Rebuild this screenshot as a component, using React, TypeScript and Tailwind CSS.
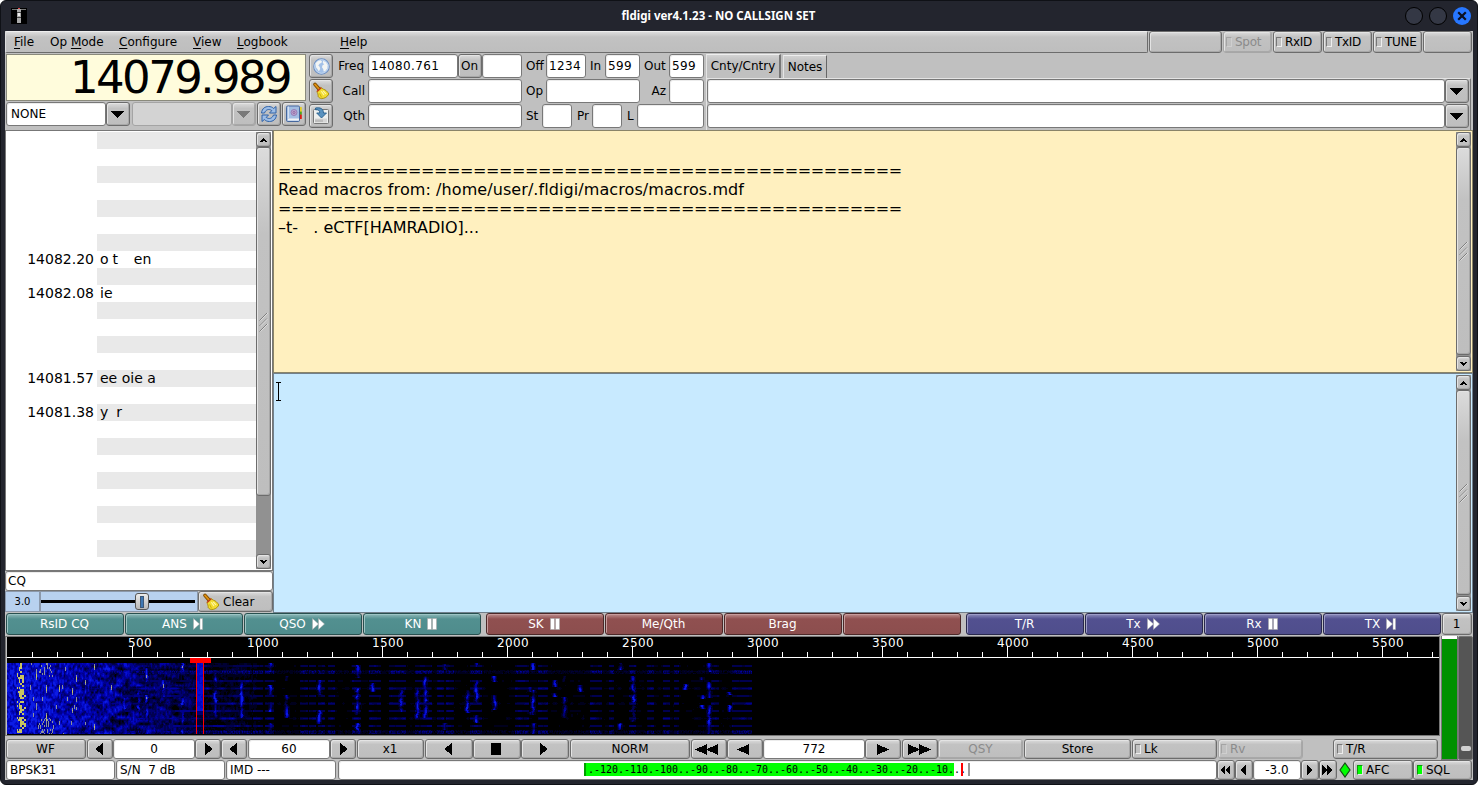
import React, { useMemo } from "react";

const RAISED =
  "box-border flex items-center justify-center rounded-[3px] border border-[#6c6c6c] bg-linear-to-b from-[#dcdcdc] via-[#c2c2c2] via-25% to-[#bebebe] shadow-[inset_1px_1px_0_#e4e4e4,inset_-1px_-1px_0_#a8a8a8] shrink-0";
const FIELD =
  "box-border flex items-center rounded-[3px] border border-[#787878] bg-white shadow-[inset_1px_1px_0_#ececec] shrink-0 whitespace-pre";

function Btn({ className = "", children }: { className?: string; children?: React.ReactNode }) {
  return <div className={`${RAISED} ${className}`}>{children}</div>;
}

function Field({ className = "", children }: { className?: string; children?: React.ReactNode }) {
  return <div className={`${FIELD} ${className}`}>{children}</div>;
}

function Light({ on = false, dim = false }: { on?: boolean; dim?: boolean }) {
  const look = on
    ? "border-[#0a9a0a] border-r-[#e6e6e6] border-b-[#e6e6e6] bg-[#00ff00]"
    : dim
      ? "border-[#a4a4a4] border-r-[#cfcfcf] border-b-[#cfcfcf]"
      : "border-[#777] border-r-[#eee] border-b-[#eee]";
  return <span className={`mr-[3px] box-border h-[10px] w-[6px] shrink-0 border ${look}`} />;
}

function Shape({ d, w, h, fill = "#000" }: { d: string; w: number; h: number; fill?: string }) {
  return (
    <svg width={w} height={h} viewBox={`0 0 ${w} ${h}`} className="block shrink-0" shapeRendering="crispEdges">
      <path d={d} fill={fill} />
    </svg>
  );
}
const Right = () => <Shape w={9} h={12} d="M1 0L9 6L1 12Z" />;
const Left = () => <Shape w={11} h={12} d="M8 0L0 6L8 12Z" />;
const WideRight = () => <Shape w={12} h={11} d="M0 0L12 5.5L0 11Z" />;
const WideLeft = () => <Shape w={16} h={11} d="M12 0L0 5.5L12 11Z" />;
const FastRight = () => <Shape w={23} h={11} d="M0 0L12 5.5L0 11ZM11 0L23 5.5L11 11Z" />;
const FastLeft = () => <Shape w={29} h={11} d="M12 0L0 5.5L12 11ZM23 0L11 5.5L23 11Z" />;
const SmallRight = () => <Shape w={6} h={10} d="M0 0L6 5L0 10Z" />;
const SmallLeft = () => <Shape w={8} h={10} d="M6 0L0 5L6 10Z" />;
const SmallFastRight = () => <Shape w={12} h={10} d="M0 0L5 5L0 10ZM5 0L10 5L5 10Z" />;
const SmallFastLeft = () => <Shape w={12} h={10} d="M5 0L0 5L5 10ZM10 0L5 5L10 10Z" />;
const Drop = ({ fill = "#000" }: { fill?: string }) => <Shape w={15} h={7} d="M0 0H13L6.5 7Z" fill={fill} />;

function Globe() {
  return (
    <svg width="17" height="17" viewBox="0 0 16 16">
      <circle cx="8" cy="8" r="7.3" fill="#a3c1e8" stroke="#6d8fc2" strokeWidth="1" />
      <circle cx="8" cy="8" r="6.4" fill="none" stroke="#d3e2f5" strokeWidth=".7" />
      <path d="M2.5 5L4 3.2L7 2.2L8.5 3.2L7.8 4.6L6.4 5.2L5 7L6.2 8.2L6.8 10L5.6 12.6L4.4 10.8L2.8 8.8Z" fill="#f3f5f4" />
      <path d="M9.6 2.6L12.2 4L13.8 6.8L13.4 9.8L11.4 12.4L10 12.6L9.6 10.4L8.4 8.8L9 6.8L10.6 5.8L9.2 4.6Z" fill="#f3f5f4" />
    </svg>
  );
}

function Broom() {
  return (
    <svg width="18" height="18" viewBox="0 0 18 18" className="shrink-0">
      <path d="M3 2.4L7 7" stroke="#7c4a00" strokeWidth="3.6" strokeLinecap="round" />
      <path d="M3 2.4L7 7" stroke="#e0900f" strokeWidth="1.8" strokeLinecap="round" />
      <path d="M4.8 9.6C6.2 8.6 8.2 6.6 8.8 5.4L11.4 7.2C13.4 7.6 15.6 9.6 16.8 12C15.4 15 12.4 16.6 9.4 16.6C7.8 16.2 6.6 15.4 6.2 14.6C6.2 12.6 5.8 11 4.8 9.6Z" fill="#f2dc30" stroke="#a88c00" strokeWidth=".9" />
      <path d="M5.1 9.5L9.2 5.8" stroke="#c6341a" strokeWidth="1.5" />
      <path d="M9.4 9.2L12 13M11.2 8.8L14 12" stroke="#fff9ae" strokeWidth="1.1" />
      <path d="M7.6 11.5L9.6 15.4" stroke="#c4a710" strokeWidth=".9" />
    </svg>
  );
}

function SaveIcon() {
  return (
    <svg width="18" height="18" viewBox="0 0 18 18">
      <rect x="1.5" y="2.5" width="15" height="14" rx="1" fill="#eef0ef" stroke="#777" />
      <rect x="3" y="11.5" width="12" height="4" fill="#d6d6d6" />
      <path d="M4 12.5V15M6 12.5V15M8 12.5V15M10 12.5V15" stroke="#989898" strokeWidth=".8" />
      <path d="M3.5 1C8 .2 11.5 1.5 11.5 6H14.5L9.5 11L4.7 6H7.7C7.8 3.6 6.3 2.5 3.5 2.7Z" fill="#5a92bf" stroke="#275f8c" strokeWidth=".9" />
    </svg>
  );
}

function SyncIcon() {
  return (
    <svg width="18" height="18" viewBox="0 0 18 18">
      <g fill="#9dbde6" stroke="#2e62a8" strokeWidth="1" strokeLinejoin="round">
        <path d="M1.5 8C2 3.5 5 1.5 8.5 1.5C10.7 1.5 12.4 2.2 13.6 3.5L16 1.5V8H9.5L11.8 5.6C9 3.5 5.8 4.5 4.5 8Z" />
        <path d="M16.5 10C16 14.5 13 16.5 9.5 16.5C7.3 16.5 5.6 15.8 4.4 14.5L2 16.5V10H8.5L6.2 12.4C9 14.5 12.2 13.5 13.5 10Z" />
      </g>
    </svg>
  );
}

function BookIcon() {
  return (
    <svg width="18" height="18" viewBox="0 0 18 18">
      <rect x="14.2" y="2" width="2.6" height="5" rx=".6" fill="#e7cf22" />
      <rect x="14.2" y="6.6" width="2.6" height="3.2" fill="#4ca51c" />
      <rect x="14.2" y="9.4" width="2.6" height="4.6" rx=".6" fill="#dd1d15" />
      <rect x="1.5" y="1" width="13" height="15.5" rx="1.2" fill="#a3bde2" stroke="#45679e" />
      <path d="M3.4 1.5V13" stroke="#d9e5f5" />
      <rect x="3" y="13.5" width="11" height="2" fill="#f1f3f5" />
      <circle cx="9" cy="7.5" r="3" fill="#b9a6cd" stroke="#8f6fae" strokeWidth=".8" />
      <circle cx="9" cy="7.5" r="1.1" fill="none" stroke="#8f5f9e" strokeWidth=".8" />
    </svg>
  );
}

function Scroll({ thumb }: { thumb: string }) {
  return (
    <div className="my-px flex w-[15px] shrink-0 flex-col bg-[#919191]">
      <Btn className="h-[15px] w-[15px]">
        <Shape w={7} h={4} d="M3.5 0L7 3V4H5L3.5 2.5L2 4H0V3Z" />
      </Btn>
      <Btn className={`w-[15px] ${thumb}`}>
        <svg width="9" height="20" viewBox="0 0 9 20">
          <path d="M.5 8.5L8 1M.5 14L8 6.5M.5 19.5L8 12" stroke="#777" strokeWidth=".9" />
          <path d="M1.5 8.5L9 1M1.5 14L9 6.5M1.5 19.5L9 12" stroke="#e6e6e6" strokeWidth=".8" />
        </svg>
      </Btn>
      <div className="grow" />
      <Btn className="h-[15px] w-[15px]">
        <Shape w={7} h={4} d="M3.5 4L7 1V0H5L3.5 1.5L2 0H0V1Z" />
      </Btn>
    </div>
  );
}

function Menu({ k, pre = "", rest, className }: { k: string; pre?: string; rest: string; className: string }) {
  return (
    <span className={`shrink-0 whitespace-pre ${className}`}>
      {pre}
      <span className="underline decoration-1 underline-offset-2">{k}</span>
      {rest}
    </span>
  );
}

const MACRO_TONES = {
  teal: "from-[#8fbab9] via-[#529090] to-[#4f8c8c] border-[#28504f] shadow-[inset_1px_1px_0_#9cc4c4]",
  red: "from-[#bd9090] via-[#905050] to-[#8c4e4e] border-[#4c2828] shadow-[inset_1px_1px_0_#c79c9c]",
  blue: "from-[#908fbd] via-[#525090] to-[#4f4e8c] border-[#28284c] shadow-[inset_1px_1px_0_#9c9cc7]",
};
type Glyph = "end" | "fast" | "pause";
const GLYPHS: Record<Glyph, React.ReactNode> = {
  end: <svg width="11" height="12"><path d="M.5 .5L6.5 6L.5 11.5ZM7 .5H9.5V11.5H7Z" fill="#fff" stroke="#aaa" strokeWidth=".5" /></svg>,
  fast: <svg width="13" height="12"><path d="M.5 .5L6.5 6L.5 11.5ZM6.5 .5L12.5 6L6.5 11.5Z" fill="#fff" stroke="#aaa" strokeWidth=".5" /></svg>,
  pause: <svg width="10" height="12"><path d="M.5 .5H4.5V11.5H.5ZM5.5 .5H9.5V11.5H5.5Z" fill="#fff" stroke="#aaa" strokeWidth=".6" /></svg>,
};

function MacroGroup({ tone, items }: { tone: keyof typeof MACRO_TONES; items: [string, Glyph?][] }) {
  return (
    <div className="flex w-[475px] shrink-0 gap-px">
      {items.map(([label, glyph], i) => (
        <div
          key={i}
          className={`box-border flex h-[22px] w-[118px] shrink-0 items-center justify-center gap-1.5 rounded-[3px] border bg-linear-to-b via-25% text-white ${glyph ? "pr-[2px]" : "pr-px"} ${MACRO_TONES[tone]}`}
        >
          <span>{label}</span>
          {glyph && GLYPHS[glyph]}
        </div>
      ))}
    </div>
  );
}

function hash(a: number, b: number) {
  let h = Math.imul(a + 101, 374761393) ^ Math.imul(b + 57, 668265263);
  h = Math.imul(h ^ (h >>> 13), 1274126177);
  return ((h ^ (h >>> 16)) >>> 0) / 4294967296;
}

function smooth(x: number, y: number, seed: number) {
  const ix = Math.floor(x);
  const iy = Math.floor(y);
  const fx = x - ix;
  const fy = y - iy;
  const top = hash(ix, iy + seed) * (1 - fx) + hash(ix + 1, iy + seed) * fx;
  const low = hash(ix, iy + 1 + seed) * (1 - fx) + hash(ix + 1, iy + 1 + seed) * fx;
  return top * (1 - fy) + low * fy;
}

type Trace = [number, ...[number, number][]];
const TRACES: Trace[] = [
  [104, [46, 55], [75, 78]], [117, [51, 54], [61, 72]], [131, [53, 76]], [139, [31, 45], [58, 81]],
  [156, [43, 60], [81, 88]], [175, [26, 35], [61, 68], [75, 97]], [208, [33, 81]], [234, [43, 81]],
  [263, [26, 35], [48, 58], [65, 75], [86, 97]], [279, [39, 44], [58, 81]], [312, [43, 58], [73, 87]],
  [350, [28, 41], [51, 78], [86, 97]], [365, [46, 55]], [394, [53, 75]], [410, [51, 81]], [418, [39, 81]],
  [438, [27, 33], [86, 93]], [460, [53, 76]], [469, [26, 30], [43, 68], [78, 86]], [487, [39, 45], [58, 73]],
  [522, [50, 55], [75, 78]], [526, [26, 33], [53, 78], [86, 97]], [547, [43, 50], [56, 60]],
  [557, [39, 45], [60, 81]], [573, [48, 55]], [613, [26, 33], [86, 93]], [626, [39, 85]],
  [678, [47, 53]], [695, [40, 43], [58, 62], [68, 72]], [702, [26, 35], [45, 61], [68, 97]], [722, [55, 58], [68, 75]],
];
const SPARKS: Trace[] = [
  [29, [35, 43], [66, 73]], [23, [49, 53]], [39, [48, 56], [76, 86]], [52, [48, 55], [84, 88]],
  [65, [51, 58], [71, 76]], [69, [38, 45], [60, 65], [70, 73]], [78, [43, 48], [85, 88]], [58, [30, 34]],
  [87, [27, 33], [87, 93]], [104, [48, 53]], [156, [47, 51]], [139, [38, 41], [60, 62]], [175, [29, 31]], [26, [76, 80]],
];
const BANDS: [number, number][] = [
  [28.5, 0.5], [34, 0.75], [35.5, 0.7], [43.5, 0.55], [51, 0.55], [58.5, 0.55], [66.2, 0.6], [73.5, 0.55], [81, 0.55], [88.5, 0.6], [94, 0.7], [95.5, 0.7],
];
const CLUSTERS: [number, number][] = [
  [246, 255], [258, 266], [293, 300], [302, 308], [311, 317], [321, 327], [345, 353], [362, 373], [382, 398], [408, 424], [430, 436], [439, 446],
  [463, 474], [508, 521], [531, 540], [583, 594], [602, 606], [622, 628], [640, 646], [656, 662], [667, 671],
  [704, 711], [725, 732], [733, 744],
];
const PALETTE = ["#00001c", "#000034", "#000050", "#00006e", "#00008c", "#0000a8", "#0208c0", "#0610d4", "#0c1ce4", "#2038dc", "#8c9098", "#c8c460"];

function level(x: number, y: number) {
  const n = smooth(x / 1.5, y / 2.4, 0);
  const wide = smooth(x / 7, y / 3.2, 400);
  const fine = hash(x, y >> 1);
  let v: number;
  if (x < 189) {
    const dense = 0.66 * (0.55 + 0.9 * n) + (fine - 0.5) * 0.1;
    const loose = (0.6 - Math.max(0, x - 92) * 0.0026) * (n * 0.8 + wide * 1.1 - 0.28);
    const t = Math.min(1, Math.max(0, (x - 25) / 95));
    v = dense * (1 - t) + loose * t;
  } else if (x < 250) {
    v = 0.22 * (n + wide - 0.5);
  } else {
    v = 0.1 * (n + wide * 0.4 - 0.4);
  }
  const cluster = CLUSTERS.some(([a, b]) => x >= a && x <= b);
  for (const [by, amp] of BANDS) {
    const d = Math.abs(y - by);
    if (d >= 1.3) continue;
    let part: number;
    if (amp > 0.65) part = (x < 245 ? 0.75 : cluster ? 0.72 : 0.3) * (0.35 + 0.65 * fine);
    else if (x < 245) part = 0.25 + 0.85 * smooth(x / 5, by, 700);
    else part = (cluster ? 0.6 : 0.08) + 0.45 * (smooth(x / 4, by, 820) - 0.4);
    v = Math.max(v, amp * part * (1 - d * 0.35));
  }
  for (const [tx, ...segs] of TRACES) {
    const sway = (smooth(tx, y / 3, 90) - 0.5) * 2;
    const d = Math.abs(x - tx - sway);
    if (d >= 3) continue;
    for (const [a, b] of segs) {
      if (y < a || y >= b) continue;
      const glow = d < 0.8 ? 0.76 : d < 1.6 ? 0.46 : 0.2;
      v = Math.max(v, glow * (0.2 + 1.05 * smooth(tx, y / 3.5, 160)));
    }
  }
  if (x > 189 && x < 197) v = Math.max(v, y < 74 ? 0.6 + n * 0.16 : y < 78 ? 0.4 : 0.12 + n * 0.16);
  v = Math.min(x < 80 ? Math.max(v, 0.22) : v, 0.82);
  for (const [sx, ...segs] of SPARKS) {
    if (x !== sx) continue;
    for (const [a, b] of segs) if (y >= a && y < b) v = Math.min(y - a, b - 1 - y) > 1 ? 0.98 : 0.9;
  }
  const block = y >> 1;
  if (x >= 10 && x < 19 && hash((x + 1) >> 1, block) > (x > 11 && x < 17 ? 0.42 : 0.82)) v = 0.98;
  if (x > 31 && x < 46 && (y < 40 || y > 80) && hash(x, block) > 0.78) v = 0.9;
  if (x >= 20 && x < 70 && hash(x, (y >> 2) + 40) > 0.975) v = 0.9;
  return v;
}

function Waterfall() {
  const paths = useMemo(() => {
    const out = PALETTE.map(() => "");
    for (let y = 26; y < 97; y++) {
      const row = Array.from({ length: 745 }, (_, x) => {
        const v = level(x, y);
        return v > 0.95 ? PALETTE.length - 1 : Math.floor(v * PALETTE.length) - (v > 0.87 ? 0 : 1);
      });
      let x = 0;
      while (x < row.length) {
        const q = row[x];
        let run = 1;
        while (row[x + run] === q) run++;
        if (q >= 0) out[q] += `M${x} ${y}h${run}v1h-${run}z`;
        x += run;
      }
    }
    return out;
  }, []);
  const ticks = Array.from({ length: 57 }, (_, i) => i + 1);
  return (
    <svg width="1432" height="98" viewBox="0 0 1432 98" className="block bg-black" shapeRendering="crispEdges">
      {paths.map((d, i) => <path key={i} d={d} fill={PALETTE[i]} />)}
      <rect x="0" y="20" width="1432" height="1" fill="#fff" />
      {ticks.map((t) => <rect key={t} x={t * 25} y={t % 5 ? 15 : 9} width="1" height={t % 5 ? 5 : 11} fill="#fff" />)}
      {ticks.filter((t) => t % 5 === 0).map((t) => (
        <text key={t} x={t * 25 - (t === 5 ? 4 : 10)} y="10" fontSize="12" letterSpacing=".37" fill="#fff">{t * 100}</text>
      ))}
      <rect x="183" y="21" width="21" height="5" fill="#f00" />
      <rect x="189" y="26" width="1" height="71" fill="#f00" />
      <rect x="196" y="26" width="1" height="71" fill="#f00" />
    </svg>
  );
}

const SIGNALS: Record<number, [string, string]> = {
  7: ["14082.20", "o t    en"],
  9: ["14082.08", "ie"],
  14: ["14081.57", "ee oie a"],
  16: ["14081.38", "y  r"],
};

function Browser() {
  return (
    <div className="flex h-[441px] border border-[#777] bg-white">
      <div className="flex w-[250px] shrink-0 flex-col overflow-hidden pt-px text-sm">
        {Array.from({ length: 25 }, (_, i) => (
          <div key={i} className="flex h-[17px] shrink-0 leading-[17px]">
            <span className="w-[91px] shrink-0 pr-[3px] text-right">{SIGNALS[i]?.[0]}</span>
            <span className={`grow whitespace-pre pl-[3px] ${i === 14 ? "" : "[word-spacing:-0.5px]"} ${i % 2 === 0 ? "bg-[#e9e9e9]" : ""}`}>
              {SIGNALS[i]?.[1]}
            </span>
          </div>
        ))}
      </div>
      <Scroll thumb="h-[349px]" />
    </div>
  );
}

const RULE = "=".repeat(48);

export default function App() {
  return (
    <div className="box-border flex h-[785px] w-[1478px] flex-col overflow-hidden rounded-[6px] border border-[#0f1116] bg-[#23252e] pr-[4px] pl-[4px] font-['DejaVu_Sans',sans-serif] text-xs leading-none text-black">
      <div className="flex h-[30px] shrink-0 items-center">
        <div className="flex w-[179px] items-center pl-[6px]">
          <svg width="16" height="16" shapeRendering="crispEdges">
            <rect width="16" height="16" fill="#000" />
            <rect x="1" y="1" width="14" height="1" fill="#777" />
            <rect x="6" y="1" width="4" height="14" fill="#aaa" />
            <rect x="6" y="4" width="4" height="1" fill="#444" />
            <rect x="6" y="9" width="4" height="1" fill="#444" />
            <rect x="7" y="5" width="2" height="3" fill="#eee" />
            <rect x="7" y="0" width="2" height="1" fill="#d44" />
          </svg>
        </div>
        <div className="grow text-center text-[11.5px] font-bold text-white font-['Noto_Sans','DejaVu_Sans',sans-serif]">fldigi ver4.1.23 - NO CALLSIGN SET</div>
        <div className="flex w-[220px] items-center justify-end gap-[6px] pr-[2px]">
          <span className="h-[18px] w-[18px] rounded-full border border-black bg-[#343845]" />
          <span className="h-[18px] w-[18px] rounded-full border border-black bg-[#343845]" />
          <span className="flex h-[18px] w-[18px] items-center justify-center rounded-full bg-[#2777ff]">
            <svg width="10" height="10"><path d="M1.2 1.2L8.8 8.8M8.8 1.2L1.2 8.8" stroke="#0c1020" strokeWidth="2.2" /></svg>
          </span>
        </div>
      </div>

      <div className="flex h-[749px] w-[1468px] shrink-0 flex-col bg-[#c0c0c0]">
        <div className="flex h-[22px] shrink-0 gap-px">
          <div className="box-border flex w-[1143px] shrink-0 items-center rounded-[2px] border border-t-[#eee] border-r-[#6c6c6c] border-b-[#6c6c6c] border-l-[#ddd] bg-linear-to-b from-[#dcdcdc] via-[#c2c2c2] via-25% to-[#bebebe] pl-2">
            <Menu className="w-[36px]" k="F" rest="ile" />
            <Menu className="w-[69px]" pre="Op " k="M" rest="ode" />
            <Menu className="w-[74px]" k="C" rest="onfigure" />
            <Menu className="w-[44px]" k="V" rest="iew" />
            <Menu className="w-[103px]" k="L" rest="ogbook" />
            <Menu className="w-[40px]" k="H" rest="elp" />
          </div>
          <Btn className="w-[73px]" />
          <Btn className="w-[49px] justify-start border-[#a6a6a6] pl-[2px] tracking-[-0.3px] text-[#8b8b8b]"><Light dim />Spot</Btn>
          <Btn className="w-[49px] justify-start pl-[2px] tracking-[-0.3px]"><Light />RxID</Btn>
          <Btn className="w-[49px] justify-start pl-[2px] tracking-[-0.3px]"><Light />TxID</Btn>
          <Btn className="w-[49px] justify-start pl-[2px] tracking-[-0.3px]"><Light />TUNE</Btn>
          <Btn className="w-[49px]" />
        </div>

        <div className="flex h-[77px] shrink-0">
          <div className="flex w-[303px] shrink-0 flex-col pt-px pl-px">
            <div className="box-border flex h-[47px] w-[300px] items-center justify-end border border-[#8a8a7c] bg-[#fffcdc] pr-[15px] text-[45px] tracking-[-2.6px]">14079.989</div>
            <div className="mt-px flex h-[24px]">
              <Field className="w-[100px] pl-1">NONE</Field>
              <Btn className="w-[24px]"><Drop /></Btn>
              <div className="ml-[2px] box-border w-[100px] shrink-0 rounded-[3px] border border-[#a4a4a4] bg-[#d3d3d3]" />
              <Btn className="w-[24px] border-[#a4a4a4]"><Drop fill="#7a7a7a" /></Btn>
              <Btn className="ml-px w-[24px]"><SyncIcon /></Btn>
              <Btn className="ml-px w-[24px]"><BookIcon /></Btn>
            </div>
          </div>
          <div className="ml-px flex w-[24px] shrink-0 flex-col gap-px pt-px">
            <Btn className="h-[24px]"><Globe /></Btn>
            <Btn className="h-[24px]"><Broom /></Btn>
            <Btn className="h-[24px]"><SaveIcon /></Btn>
          </div>
          <div className="flex w-[371px] shrink-0 flex-col gap-px pt-px">
            <div className="flex h-[24px] items-center">
              <span className="w-[35px] shrink-0 pr-[4px] text-right">Freq</span>
              <Field className="h-full w-[90px] pl-[2px] tracking-[.37px]">14080.761</Field>
              <Btn className="h-full w-[24px] pr-px">On</Btn>
              <Field className="h-full w-[40px]" />
              <span className="w-[24px] shrink-0 pl-[4px]">Off</span>
              <Field className="h-full w-[40px] pl-[2px] tracking-[.37px]">1234</Field>
              <span className="w-[19px] shrink-0 pl-[4px]">In</span>
              <Field className="h-full w-[35px] pl-[2px] tracking-[.37px]">599</Field>
              <span className="w-[29px] shrink-0 pl-[4px]">Out</span>
              <Field className="h-full w-[35px] pl-[2px] tracking-[.37px]">599</Field>
            </div>
            <div className="flex h-[24px] items-center">
              <span className="w-[35px] shrink-0 pr-[3px] text-right">Call</span>
              <Field className="h-full w-[154px]" />
              <span className="w-[24px] shrink-0 pl-[4px]">Op</span>
              <Field className="h-full w-[94px]" />
              <span className="w-[29px] shrink-0 pr-[3px] text-right">Az</span>
              <Field className="h-full w-[35px]" />
            </div>
            <div className="flex h-[24px] items-center">
              <span className="w-[35px] shrink-0 pr-[3px] text-right">Qth</span>
              <Field className="h-full w-[154px]" />
              <span className="w-[20px] shrink-0 pl-[4px]">St</span>
              <Field className="h-full w-[30px]" />
              <span className="w-[20px] shrink-0 pl-[5px]">Pr</span>
              <Field className="h-full w-[30px]" />
              <span className="w-[15px] shrink-0 pl-[5px]">L</span>
              <Field className="h-full w-[67px]" />
            </div>
          </div>
          <div className="ml-[2px] flex grow flex-col">
            <div className="flex h-[25px] items-end gap-[2px]">
              <div className="box-border flex h-[24px] w-[75px] items-center justify-center border-t border-r-2 border-l border-t-[#eee] border-r-[#777] border-l-[#e4e4e4] bg-linear-to-b from-[#d2d2d2] to-[#c0c0c0] to-30% pb-px">Cnty/Cntry</div>
              <div className="box-border flex h-[23px] w-[44px] items-center justify-center border-t border-r border-l border-t-[#eee] border-r-[#666] border-l-[#e4e4e4] bg-linear-to-b from-[#d2d2d2] to-[#c0c0c0] to-30%">Notes</div>
            </div>
            <div className="flex w-[765px] grow flex-col gap-px border-t border-r border-l border-t-[#e4e4e4] border-r-[#777] border-l-[#e4e4e4]">
              <div className="flex h-[24px]"><Field className="w-[738px]" /><Btn className="w-[24px]"><Drop /></Btn></div>
              <div className="flex h-[24px]"><Field className="w-[738px]" /><Btn className="w-[24px]"><Drop /></Btn></div>
            </div>
          </div>
        </div>

        <div className="flex h-[483px] shrink-0">
          <div className="flex w-[268px] shrink-0 flex-col">
            <Browser />
            <Field className="h-[20px] pl-[2px]">CQ</Field>
            <div className="flex h-[21px]">
              <div className="box-border flex w-[35px] items-center justify-center border border-[#8b98aa] bg-[#b8d1ef] text-[10px]">3.0</div>
              <div className="box-border flex w-[158px] items-center border border-[#8b98aa] bg-[#b8d1ef]">
                <div className="h-[3px] w-[94px] bg-black" />
                <div className="box-border flex h-[17px] w-[14px] items-center justify-center rounded-[3px] border border-[#555] bg-linear-to-b from-[#ececec] to-[#b8b8b8]">
                  <div className="h-[12px] w-[4px] border border-[#3c5878] bg-[#3f78b4]" />
                </div>
                <div className="h-[3px] w-[46px] bg-black" />
              </div>
              <Btn className="w-[75px] justify-start gap-[3px] pl-[3px]"><Broom />Clear</Btn>
            </div>
          </div>
          <div className="flex grow flex-col">
            <div className="flex h-[243px] border border-[#8a8468] bg-[#fff0bf]">
              <pre className="grow pt-[30px] pl-[4px] text-[16px] leading-[19px] font-['DejaVu_Sans',sans-serif]">
                <div className="tracking-[-0.41px]">{RULE}</div>
                <div className="tracking-[0.08px]">Read macros from: /home/user/.fldigi/macros/macros.mdf</div>
                <div className="tracking-[-0.41px]">{RULE}</div>
                <div>–t-   . eCTF[HAMRADIO]...</div>
              </pre>
              <Scroll thumb="h-[208px]" />
              <div className="w-px" />
            </div>
            <div className="flex h-[240px] border border-[#71808c] bg-[#c8eaff]">
              <div className="grow pt-[8px] pl-px">
                <svg width="6" height="20" shapeRendering="crispEdges"><path d="M.5 .5H5.5M3 .5V19M.5 18.5H5.5" stroke="#000" strokeWidth="1" /></svg>
              </div>
              <Scroll thumb="h-[205px]" />
              <div className="w-px" />
            </div>
          </div>
        </div>

        <div className="flex h-[23px] shrink-0 items-start gap-[5px] pl-px">
          <MacroGroup tone="teal" items={[["RsID CQ"], ["ANS", "end"], ["QSO", "fast"], ["KN", "pause"]]} />
          <MacroGroup tone="red" items={[["SK", "pause"], ["Me/Qth"], ["Brag"], [""]]} />
          <MacroGroup tone="blue" items={[["T/R"], ["Tx", "fast"], ["Rx", "pause"], ["TX", "end"]]} />
          <Btn className="-ml-[4px] h-[22px] w-[30px] pr-px">1</Btn>
        </div>

        <div className="flex h-[124px] shrink-0">
          <div className="flex w-[1436px] shrink-0 flex-col">
            <div className="box-border h-[100px] w-[1435px] border border-[#777] pl-px"><Waterfall /></div>
            <div className="mt-[3px] flex h-[20px] pl-px">
              <Btn className="w-[80px] pr-px">WF</Btn>
              <Btn className="ml-px w-[26px]"><Left /></Btn>
              <Field className="w-[82px] justify-center">0</Field>
              <Btn className="w-[26px]"><Right /></Btn>
              <Btn className="w-[26px]"><Left /></Btn>
              <Field className="ml-px w-[82px] justify-center">60</Field>
              <Btn className="w-[26px]"><Right /></Btn>
              <Btn className="ml-px w-[67px] pr-px">x1</Btn>
              <Btn className="ml-px w-[48px]"><Left /></Btn>
              <Btn className="w-[48px] pr-[2px]"><span className="h-[12px] w-[10px] bg-black" /></Btn>
              <Btn className="w-[48px] pr-[3px]"><Right /></Btn>
              <Btn className="ml-px w-[120px]">NORM</Btn>
              <Btn className="ml-px w-[36px]"><FastLeft /></Btn>
              <Btn className="w-[36px]"><WideLeft /></Btn>
              <Field className="w-[102px] justify-center">772</Field>
              <Btn className="w-[36px]"><WideRight /></Btn>
              <Btn className="ml-px w-[36px] pr-px"><FastRight /></Btn>
              <Btn className="w-[85px] border-[#a6a6a6] text-[#8b8b8b]">QSY</Btn>
              <Btn className="ml-px w-[107px]">Store</Btn>
              <Btn className="ml-px w-[85px] justify-start pl-[2px]"><Light />Lk</Btn>
              <Btn className="ml-px w-[85px] justify-start border-[#a6a6a6] pl-[2px] text-[#8b8b8b]"><Light dim />Rv</Btn>
              <Btn className="ml-[30px] w-[105px] justify-start pl-[3px]"><Light />T/R</Btn>
            </div>
          </div>
          <div className="box-border flex w-[17px] shrink-0 flex-col border border-t-0 border-[#777] bg-[#009100]"><div className="h-[3px] bg-white" /></div>
          <div className="box-border flex w-[15px] shrink-0 flex-col items-center justify-end rounded-[2px] border border-[#777] bg-[#555] pb-[8px]">
            <div className="h-[5px] w-[10px] rounded-[2px] bg-[#d0d0d0]" />
          </div>
        </div>

        <div className="flex h-[20px] shrink-0 pl-px">
          <Field className="w-[109px] pl-[3px]">BPSK31</Field>
          <Field className="ml-px w-[109px] pl-[3px]">S/N  7 dB</Field>
          <Field className="ml-px w-[110px] pl-[3px]">IMD ---</Field>
          <Field className="ml-[2px] w-[879px] pb-px pl-[245px]">
            <div className="flex h-[13px] w-[370px] shrink-0 items-center border-l-2 border-[#00a000] bg-[#00ff00] pl-[2px] font-['DejaVu_Sans_Mono',monospace] text-[10px] tracking-[-0.02px]">.-120.-110.-100..-90..-80..-70..-60..-50..-40..-30..-20..-10.</div>
            <span className="w-[12px] font-['DejaVu_Sans_Mono',monospace] text-[10px]">..</span>
            <div className="-ml-[5px] h-[13px] w-[2px] bg-[#f00]" />
            <div className="ml-[5px] h-[13px] w-[2px] bg-[#999]" />
          </Field>
          <Btn className="w-[18px]"><SmallFastLeft /></Btn>
          <Btn className="w-[18px]"><SmallLeft /></Btn>
          <Field className="w-[48px] justify-center">-3.0</Field>
          <Btn className="w-[18px]"><SmallRight /></Btn>
          <Btn className="w-[18px]"><SmallFastRight /></Btn>
          <div className="flex w-[16px] shrink-0 items-center justify-center">
            <svg width="12" height="16"><path d="M6 1L11 8L6 15L1 8Z" fill="#00ff00" stroke="#174a17" strokeWidth="1.2" /></svg>
          </div>
          <Btn className="w-[60px] justify-start pl-[3px]"><Light on />AFC</Btn>
          <Btn className="w-[59px] justify-start pl-[3px]"><Light on />SQL</Btn>
        </div>
      </div>
    </div>
  );
}
